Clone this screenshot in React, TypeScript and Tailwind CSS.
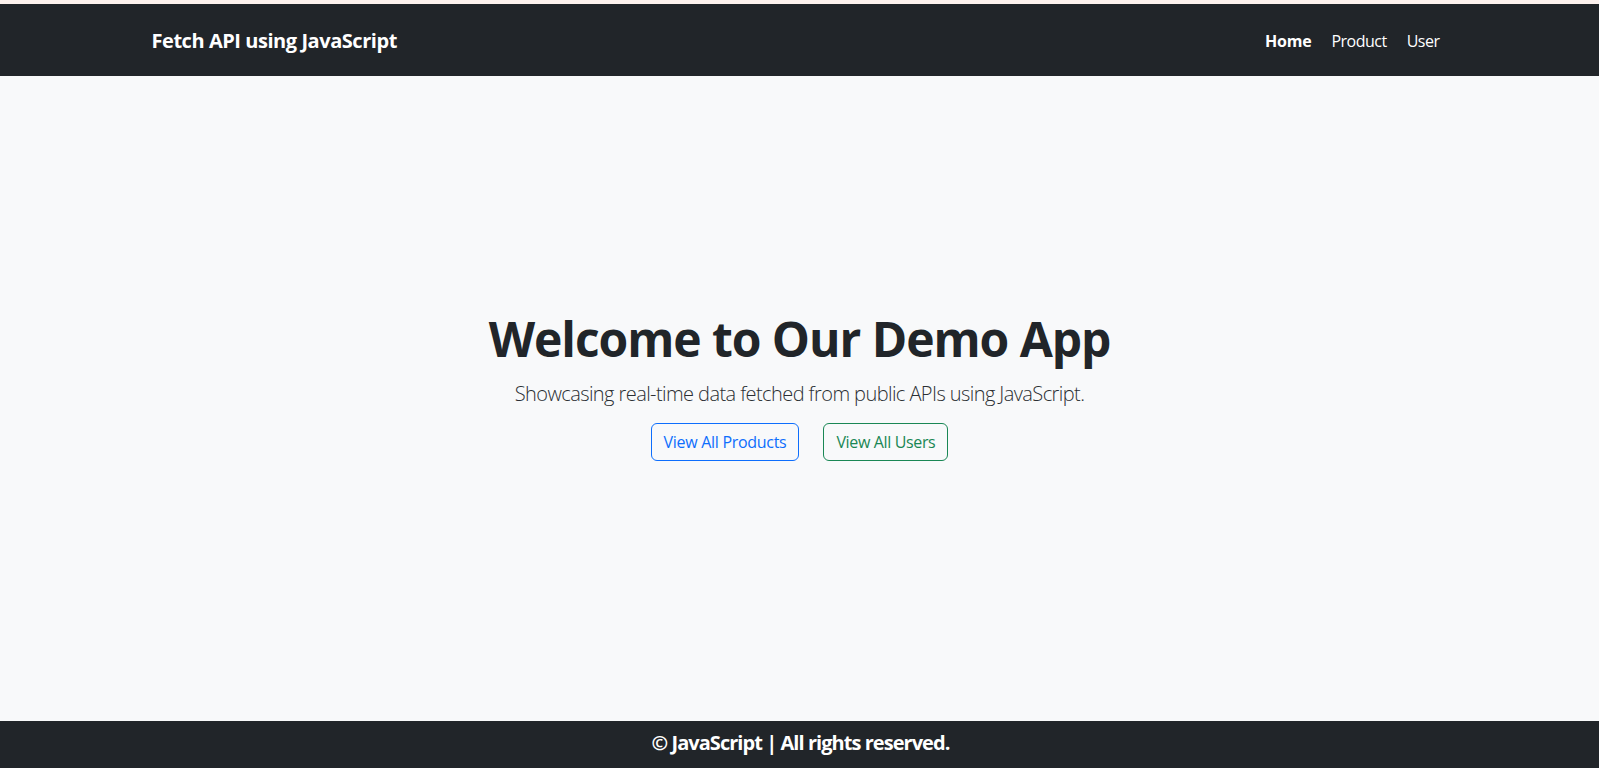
export default function App() {
  return (
    <div className="min-h-screen flex flex-col bg-[#f8f9fa] font-['Open_Sans',sans-serif] text-[#212529]">
      {/* thin top strip */}
      <div className="h-[4px] bg-[#fdf2ee]"></div>

      {/* Navbar */}
      <nav className="bg-[#212529] h-[72px]">
        <div className="max-w-[1320px] h-full mx-auto px-3 flex items-center justify-between">
          <a href="#" className="text-xl font-bold text-white tracking-[-0.45px] pt-[2px]">Fetch API using JavaScript</a>
          <ul className="flex items-center pt-[2px]">
            <li><a href="#" className="pl-2 pr-[10px] text-base font-bold text-white tracking-[-0.2px]">Home</a></li>
            <li><a href="#" className="px-[10px] text-base text-white tracking-[-0.5px]">Product</a></li>
            <li><a href="#" className="pl-[10px] pr-2 text-base text-white tracking-[-0.5px]">User</a></li>
          </ul>
        </div>
      </nav>

      {/* Hero Section */}
      <main className="flex-1 flex flex-col items-center justify-center text-center pb-[26px]">
        <h1 className="text-[48px] leading-[57.6px] font-bold mb-2 tracking-[-1.05px]">Welcome to Our Demo App</h1>
        <p className="text-xl leading-[30px] font-light mb-[14px] tracking-[-0.58px] text-[#2b2f33] pt-[3px]">
          Showcasing real-time data fetched from public APIs using JavaScript.
        </p>
        <div className="flex items-center gap-6">
          <a href="#" className="px-3 py-[6px] border border-[#0d6efd] text-[#0d6efd] rounded-md text-base leading-6 tracking-[-0.3px]">
            View All Products
          </a>
          <a href="#" className="px-3 py-[6px] border border-[#198754] text-[#198754] rounded-md text-base leading-6 tracking-[-0.35px]">
            View All Users
          </a>
        </div>
      </main>

      {/* Footer */}
      <footer className="bg-[#212529] h-[47px] flex items-center justify-center">
        <p className="text-xl font-bold text-white tracking-[-0.95px] pb-[3px] pl-[2px]">© JavaScript | All rights reserved.</p>
      </footer>
    </div>
  );
}
